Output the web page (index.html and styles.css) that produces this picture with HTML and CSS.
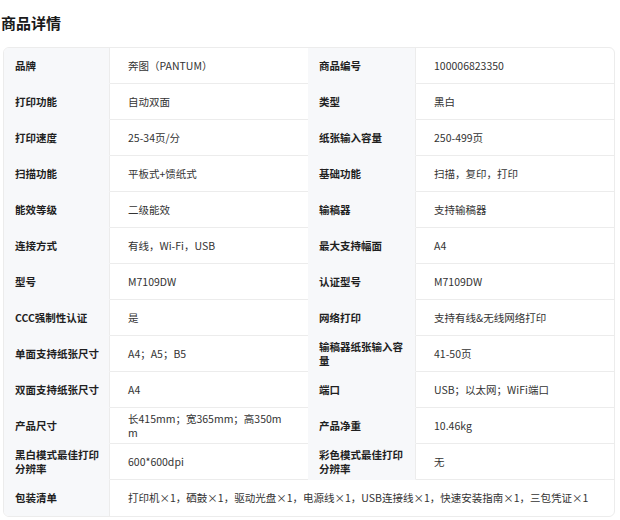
FILE: index.html
```html
<!DOCTYPE html>
<html lang="zh-CN">
<head>
<meta charset="utf-8">
<title>商品详情</title>
<link rel="stylesheet" href="styles.css">
</head>
<body>
<h2 class="title">商品详情</h2>
<div class="card">
  <div class="lb">品牌</div><div class="val">奔图（PANTUM）</div><div class="lb">商品编号</div><div class="val">100006823350</div>
  <div class="lb">打印功能</div><div class="val">自动双面</div><div class="lb">类型</div><div class="val">黑白</div>
  <div class="lb">打印速度</div><div class="val">25-34页/分</div><div class="lb">纸张输入容量</div><div class="val">250-499页</div>
  <div class="lb">扫描功能</div><div class="val">平板式+馈纸式</div><div class="lb">基础功能</div><div class="val">扫描，复印，打印</div>
  <div class="lb">能效等级</div><div class="val">二级能效</div><div class="lb">输稿器</div><div class="val">支持输稿器</div>
  <div class="lb">连接方式</div><div class="val">有线，Wi-Fi，USB</div><div class="lb">最大支持幅面</div><div class="val">A4</div>
  <div class="lb">型号</div><div class="val">M7109DW</div><div class="lb">认证型号</div><div class="val">M7109DW</div>
  <div class="lb">CCC强制性认证</div><div class="val">是</div><div class="lb">网络打印</div><div class="val">支持有线&amp;无线网络打印</div>
  <div class="lb">单面支持纸张尺寸</div><div class="val">A4；A5；B5</div><div class="lb">输稿器纸张输入容量</div><div class="val">41-50页</div>
  <div class="lb">双面支持纸张尺寸</div><div class="val">A4</div><div class="lb">端口</div><div class="val">USB；以太网；WiFi端口</div>
  <div class="lb">产品尺寸</div><div class="val">长415mm；宽365mm；高350mm</div><div class="lb">产品净重</div><div class="val">10.46kg</div>
  <div class="lb">黑白模式最佳打印分辨率</div><div class="val">600*600dpi</div><div class="lb">彩色模式最佳打印分辨率</div><div class="val">无</div>
  <div class="lb last">包装清单</div><div class="val wide last">打印机×1，硒鼓×1，驱动光盘×1，电源线×1，USB连接线×1，快速安装指南×1，三包凭证×1</div>
</div>
</body>
</html>
```
FILE: styles.css
```css
html, body {
  margin: 0;
  padding: 0;
  background: #ffffff;
}
body {
  width: 620px;
  padding: 0 0 0 1px;
  font-family: "Noto Sans CJK SC", "Microsoft YaHei", sans-serif;
  color: #333333;
}
.title {
  margin: 0;
  padding-top: 13px;
  font-size: 15px;
  line-height: 20px;
  font-weight: 700;
  color: #1a1a1a;
  margin-bottom: 14px;
}
.card {
  margin-left: 2px;
  width: 610px;
  border: 1px solid #ececec;
  border-radius: 6px;
  overflow: hidden;
  display: grid;
  grid-template-columns: 106px 198px 108px 1fr;
  grid-auto-rows: 36px;
  font-size: 10.5px;
}
.lb {
  background: #f7f8fa;
  border-right: 1px solid #ececec;
  border-bottom: 1px solid #f7f8fa;
  padding: 0 8px 0 11px;
  display: flex;
  align-items: center;
  font-weight: 700;
  color: #1f1f1f;
  line-height: 13.5px;
}
.val {
  border-bottom: 1px solid #ececec;
  padding: 0 24px 0 18px;
  display: flex;
  align-items: center;
  line-height: 13.5px;
  word-break: break-all;
  color: #333333;
}
.wide {
  grid-column: 2 / 5;
  padding-right: 18px;
}
.last {
  border-bottom: none;
}
```
